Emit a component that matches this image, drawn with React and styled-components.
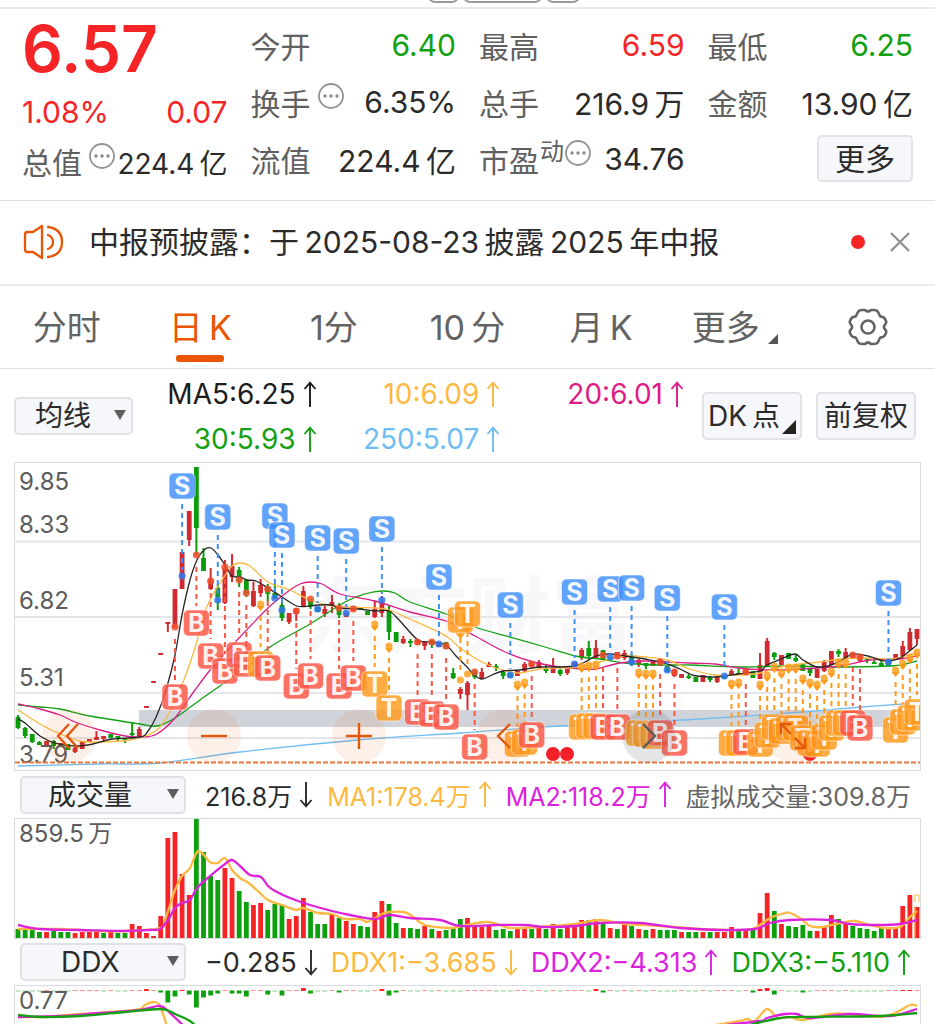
import React from "react";
import styled, { createGlobalStyle } from "styled-components";

const GlobalStyle = createGlobalStyle`
  * { box-sizing: border-box; }
  body { margin: 0; background: #fff; }
  body, button, select {
    font-family: Inter, "Noto Sans CJK SC", sans-serif;
    color: #2b2b2b;
  }
  button, select { margin: 0; cursor: pointer; }
`;

const red = "#f52426";
const green = "#12a012";
const amber = "#fcb941";
const violet = "#dc23dc";
const pink = "#dd1c87";
const sky = "#6fbdf2";
const brand = "#ea5504";
const candleRed = "#cf2b30";

/* ---------- layout ---------- */
const Page = styled.main`
  width: 100%;
  overflow: hidden;
`;
const TopStrip = styled.div`
  display: flex;
  justify-content: center;
  align-items: flex-end;
  gap: 4px;
  height: 9px;
  padding-left: 73px;
  padding-bottom: 4px;
  overflow: hidden;
  border-bottom: 2px solid #ebebeb;
`;
const StripPill = styled.span`
  flex: none;
  width: ${(p) => p.$w}px;
  height: 24px;
  border: 2px solid #9b9b9b;
  border-radius: 7px;
`;

const Quote = styled.section`
  display: grid;
  grid-template-columns: repeat(4, minmax(0, 1fr));
  grid-auto-rows: 57px;
  column-gap: 23px;
  padding: 8px 22px 12px;
  border-bottom: 1px solid #dedede;
`;
const PriceColumn = styled.div`
  grid-row: span 3;
`;
const Price = styled.div`
  height: 67px;
  line-height: 64px;
  font-size: 64px;
  font-weight: 600;
  color: ${red};
`;
const Change = styled.div`
  display: flex;
  justify-content: space-between;
  height: 54px;
  line-height: 56px;
  font-size: 30px;
  color: ${red};
`;
const Stat = styled.div`
  display: flex;
  align-items: center;
  justify-content: space-between;
  height: ${(p) => (p.$compact ? 48 : 57)}px;
  font-size: 30px;
  white-space: nowrap;
`;
const StatLabel = styled.span`
  display: flex;
  align-items: center;
  padding-bottom: 2px;
  color: #606060;
`;
const Sup = styled.sup`
  padding: 0 1px 14px;
  font-size: 24px;
  line-height: 24px;
  vertical-align: baseline;
`;
const InfoButton = styled.button`
  display: flex;
  margin: 0 0 11px ${(p) => p.$gap || 0}px;
  padding: 0;
  border: 0;
  background: none;
`;
const StatValue = styled.span`
  padding-bottom: 1px;
  font-size: ${(p) => (p.$small ? 28 : 30)}px;
  color: ${(p) => p.$color || "#2b2b2b"};
`;
const PlainButton = styled.button`
  position: relative;
  width: ${(p) => p.$w}px;
  height: ${(p) => p.$h}px;
  padding: 0 ${(p) => p.$tail || 0}px 0 0;
  border: 2px solid #e0e2e6;
  border-radius: 5px;
  background: #f6f7fa;
  font-size: ${(p) => p.$size}px;
  line-height: 1;
  white-space: nowrap;
`;
const MoreCell = styled.div`
  display: flex;
  align-items: center;
  justify-content: flex-end;
  padding-bottom: 2px;
`;

const Notice = styled.section`
  display: flex;
  align-items: center;
  height: 85px;
  padding: 0 24px 2px 23px;
  border-bottom: 2px solid #ececec;
`;
const NoticeText = styled.p`
  flex: 1;
  margin: 0 0 0 24px;
  padding-bottom: 4px;
  font-size: 30px;
  white-space: nowrap;
`;
const UnreadDot = styled.span`
  width: 14px;
  height: 14px;
  margin-right: 24px;
  border-radius: 50%;
  background: ${red};
`;
const IconButton = styled.button`
  display: flex;
  align-items: center;
  justify-content: center;
  padding: 0;
  border: 0;
  background: none;
`;

const Tabs = styled.nav`
  display: flex;
  height: 83px;
  border-bottom: 1px solid #dfe0e2;
`;
const Tab = styled.button`
  position: relative;
  display: flex;
  flex: 1;
  align-items: center;
  justify-content: center;
  gap: 8px;
  padding: 0 0 ${(p) => (p.$icon ? 0 : 4)}px;
  border: 0;
  background: none;
  font-size: 34px;
  white-space: nowrap;
  color: ${(p) => (p.$active ? brand : "#636363")};
  &::after {
    content: "";
    position: absolute;
    bottom: 6px;
    left: calc(50% - 24px);
    width: 48px;
    height: 7px;
    border-radius: 3px;
    background: ${(p) => (p.$active ? brand : "transparent")};
  }
`;
const TabCorner = styled.svg`
  align-self: flex-end;
  margin-bottom: 20px;
`;

const Toolbar = styled.section`
  display: flex;
  align-items: center;
  height: 93px;
  padding: 0 19px 0 14px;
`;
const SelectBox = styled.label`
  position: relative;
  flex: none;
  width: ${(p) => p.$w}px;
  height: 38px;
`;
const Select = styled.select`
  width: 100%;
  height: 100%;
  padding: 0 26px 0 ${(p) => p.$inset}px;
  appearance: none;
  border: 2px solid #dfe1e4;
  border-radius: 5px;
  background: #f6f7fa;
  font-size: 28px;
  line-height: 34px;
`;
const SelectArrow = styled.svg`
  position: absolute;
  right: 7px;
  top: 13px;
  pointer-events: none;
`;
const Legend = styled.div`
  display: grid;
  flex: 1;
  grid-template-columns: repeat(3, 1fr);
  grid-auto-rows: 45px;
  margin-right: 18px;
  padding-top: 2px;
`;
const Reading = styled.span`
  display: flex;
  align-items: center;
  justify-content: flex-end;
  gap: ${(p) => p.$gap || 7}px;
  font-size: ${(p) => p.$size || 28}px;
  white-space: nowrap;
  color: ${(p) => p.$color};
`;
const ButtonPair = styled.div`
  display: flex;
  gap: 14px;
`;
const Corner = styled.svg`
  position: absolute;
  right: 4px;
  bottom: 4px;
`;

const Panel = styled.section`
  position: relative;
  margin: 0 14px;
  border: 1px solid #d9dbdf;
  border-bottom-width: ${(p) => (p.$open ? 0 : 1)}px;
`;
const Plot = styled.svg`
  display: block;
  width: 100%;
  height: auto;
  font-family: Inter, "Noto Sans CJK SC", sans-serif;
`;
const Controls = styled.div`
  position: absolute;
  left: 3%;
  right: 11%;
  bottom: 7px;
  display: flex;
  justify-content: space-between;
`;
const RoundButton = styled.button`
  display: flex;
  align-items: center;
  justify-content: center;
  width: 54px;
  height: 54px;
  padding: 0;
  border: 0;
  border-radius: 50%;
  background: ${(p) => (p.$grey ? "rgba(90,95,105,.16)" : "rgba(234,85,4,.09)")};
`;
const IndicatorRow = styled.section`
  display: flex;
  align-items: center;
  gap: 19px;
  height: ${(p) => p.$h}px;
  padding: 0 24px 0 20px;
`;
const Readings = styled.div`
  display: flex;
  flex: 1;
  justify-content: space-between;
`;

/* ---------- small icons ---------- */
const InfoIcon = () => (
  <svg width="26" height="26" viewBox="0 0 26 26" fill="none" stroke="#939393" strokeWidth="1.8">
    <circle cx="13" cy="13" r="12" />
    <g fill="#8a8a8a" stroke="none">
      <circle cx="7" cy="13" r="1.7" /><circle cx="13" cy="13" r="1.7" /><circle cx="19" cy="13" r="1.7" />
    </g>
  </svg>
);
const Speaker = () => (
  <svg width="42" height="36" viewBox="0 0 42 36" fill="none" stroke={brand} strokeWidth="2.3" strokeLinecap="round" strokeLinejoin="round">
    <path d="M10 8H4Q2 8 2 11V25Q2 28 4 28H10L19 34V2Z" />
    <path d="M25 11Q30 13 30 18T25 25M25 3Q39 5 39 18T25 33" />
  </svg>
);
const Cross = () => (
  <svg width="22" height="22" viewBox="0 0 22 22" stroke="#929292" strokeWidth="2.4">
    <path d="M2 2L20 20M20 2L2 20" />
  </svg>
);
const Gear = () => (
  <svg width="40" height="38" viewBox="0 0 40 38" fill="none" stroke="#636363" strokeWidth="2.6" strokeLinejoin="round">
    <path d="M14 2H17Q20 5 23 2H26Q29 2 30 4L32 8Q33 9 35 9Q37 10 38 13Q39 15 36 18V20Q39 23 38 25Q37 28 35 29Q33 29 32 30L30 34Q29 36 26 36H23Q20 33 17 36H14Q11 36 10 34L8 30Q7 29 5 29Q3 28 2 25Q1 23 4 20V18Q1 15 2 13Q3 10 5 9Q7 9 8 8L10 4Q11 2 14 2Z" />
    <circle cx="20" cy="19" r="6.5" />
  </svg>
);
const Arrow = ({ down }) => (
  <svg width="14" height="27" viewBox="0 0 14 27" fill="none" stroke="currentColor" strokeWidth="1.9" role="img" aria-label={down ? "下降" : "上升"}>
    {down ? <path d="M7 1V25M1.5 19L7 25.4L12.5 19" /> : <path d="M7 26V2M1.5 8L7 1.6L12.5 8" />}
  </svg>
);
const DropDown = ({ label, w, inset }) => (
  <SelectBox $w={w}>
    <Select aria-label={label} defaultValue={label} $inset={inset}>
      <option>{label}</option>
    </Select>
    <SelectArrow width="12" height="10" viewBox="0 0 12 10"><path d="M0 0H12L6 10Z" fill="#5d5d5d" /></SelectArrow>
  </SelectBox>
);

/* ---------- data ---------- */
const xAt = (i) => 18 + i * 7.135;

// colour, body top, body bottom, wick top, wick bottom
const candles = `g 717 728 715 729|g 728 736 727 738|g 734 742 734 743|g 742 745 741 745|r 741 746|g 741 746 740 749|r 743 747|g 744 750|r 748 752 747 753|r 742 749|r 739 742|r 737 740 731 740|r 736 739 736 742|g 734 738|g 736 739 736 741|g 738 740 738 743|g 733 735 722 736|r 729 736 727 737|r 706 708|r 681 683|r 653 655|r 622 624 622 632|r 589 628|r 552 589|r 511 540 511 546|g 467 528 467 556|g 558 571 548 571|r 579 589 568 590|g 588 597 584 610|r 568 603 560 604|r 566 577 554 582|g 570 581 567 587|g 580 594 579 597|r 591 606 582 607|r 585 593 579 597|g 587 594 584 601|g 593 598 583 599|g 605 618 602 621|r 613 622 613 624|r 608 614 608 621|r 591 607 586 607|g 600 606 598 609|g 607 612|r 609 614 606 617|r 602 606 595 613|g 608 615 603 618|r 612 617|r 606 611|g 608 610|g 611 615|r 609 617 601 618|r 602 613 596 617|g 610 632 606 640|g 632 642|r 639 643 636 644|g 641 643 639 647|r 640 645|r 642 646 641 650|g 640 645 640 648|r 643 647|g 642 649|g 673 678 668 679|r 689 694 687 699|r 683 695 681 710|g 671 677 669 679|r 672 678 668 679|r 664 667 662 667|g 666 668 664 671|g 672 676 670 679|g 673 678|r 671 676|r 664 671 662 672|r 662 666 661 668|r 662 668 660 668|g 668 671 665 673|r 667 673 658 673|g 670 674 669 676|r 669 673 669 675|r 662 668|r 650 658 648 660|g 648 656 641 659|r 648 658 640 658|g 650 660|g 657 660|r 652 659|r 653 658 650 660|g 657 664 654 666|r 660 664 659 667|g 663 666 663 669|r 662 666|r 659 666|g 666 672|r 670 676 669 677|r 674 678|g 676 678 674 679|g 677 682|r 675 682|g 677 680 676 682|r 677 682 676 683|g 675 679|r 671 675 669 675|g 673 675 669 675|r 669 674|g 671 678|r 665 679 653 679|r 641 667 638 667|g 653 657 652 660|r 655 665|g 653 659|g 658 661 655 662|g 663 671|g 669 673 668 676|r 669 678|r 662 671 660 672|r 651 665|g 651 654 649 657|r 652 659 648 660|r 653 659|r 655 661|g 659 661 658 663|g 662 664 660 664|g 663 666 660 666|g 661 666|r 654 660|r 646 656 641 658|r 632 650 628 651|r 629 639 629 645`
  .split("|")
  .map((row) => row.split(" "))
  .map(([c, a, b, h, l]) => ({ c, a: +a, b: +b, h: +(h || a), l: +(l || b) }));

// kind, bar index, badge centre, signal dot
const signals = `S 23 486 576|S 28 517 600|S 36 516 598|S 37 535 610|S 42 538 609|S 46 541 613|S 51 529 600|S 59 577 644|S 69 605 675|S 78 592 664|S 83 589 657|S 86 588 662|S 91 598 670|S 99 607 676|S 122 593 662|B 22 697 627|B 25 623 555|B 27 656 581|B 29 671 567|B 31 655 580|B 32 664 593|T 34 664 604|B 35 668 589|B 39 686 611|B 41 676 599|B 45 686 608|B 47 678 609|T 50 684 624|T 52 708 646|B 56 712 642|B 58 714 642|B 60 717 646|T 62 620 680|T 63 614 674|B 64 747 672|T 70 744 684|T 71 742 682|B 72 735 664|T 79 727 666|T 80 726 665|T 81 726 664|B 82 727 655|B 84 727 656|T 87 733 672|T 88 734 673|T 89 736 673|B 90 733 662|B 92 743 672|T 100 743 683|T 101 743 682|B 102 742 672|T 104 744 684|T 105 735 675|T 106 727 666|T 107 731 672|T 108 728 667|T 109 728 667|T 110 738 678|T 111 743 682|T 112 744 684|T 113 737 678|T 114 728 671|T 115 723 662|T 116 723 662|B 117 723 655|B 118 728 657|T 123 730 670|T 124 722 663|T 125 718 657|T 126 712 652`
  .split("|")
  .map((row) => row.split(" "))
  .map(([kind, i, y, dot]) => ({ kind, x: xAt(+i), y: +y, dot: +dot }));

const volume = `g929 g930 g930 g932 r932 g931 g932 g932 r933 r932 r932 r932 g933 r932 g933 g933 r924 r926 r933 r936 r916 r838 r832 r874 r895 g819 g852 g876 g880 r868 r878 g891 g902 r905 r903 g910 g904 g905 r919 r916 r898 g912 g924 g924 r914 g918 r921 r924 g926 g927 r912 r901 g904 g923 r928 g928 g929 r926 g929 r931 g930 g928 g919 r918 r926 r927 r926 g930 g929 g931 r929 r929 g929 r928 g929 r924 g929 r927 r925 r920 g920 r919 g924 r928 g929 r924 g926 r929 g930 r929 g930 g930 g930 r932 g932 g932 r932 g932 r932 r932 r927 g930 r930 g930 r913 r893 g911 r924 g926 g927 g925 g931 r931 r926 r915 g919 r924 g926 g928 g929 g931 g928 r929 r928 r906 r895 r907`.split(" ");

const flow = { 18: 2, 20: -2, 21: -12, 22: -6, 23: 1, 24: -4, 25: -17, 26: -7, 27: -5, 28: -3, 30: -3, 31: -3, 32: -6, 35: -4, 37: -5, 40: 3, 41: -3, 45: -2, 51: 2, 52: -5, 53: -2, 81: 2, 82: -2, 103: -2, 104: 2, 105: 3, 106: -4, 110: -2, 124: 1, 125: 1 };

const averages = [
  [sky, "18,766 100,764 160,763 240,752 358,740 460,733 560,726 645,722 700,719 790,713 850,708 917,703"],
  [green, "18,705 40,707 60,709 90,716 140,724 157,726 175,718 200,700 235,675 270,647 310,624 345,602 365,594 382,591 395,593 410,602 446,614 475,627 510,637 545,647 575,656 600,659 625,663 660,665 690,665 738,667 790,666 830,667 890,666 905,664 917,661"],
  [pink, "18,704 40,709 60,715 75,722 100,730 125,736 142,737 157,734 175,718 195,690 215,664 240,637 268,608 290,590 300,584 310,582 322,584 340,594 375,601 410,612 446,621 475,636 503,651 530,661 560,667 585,669 596,669 620,663 645,661 690,663 715,664 738,668 767,670 800,669 840,666 870,660 900,659 917,656"],
  [amber, "18,710 40,724 60,734 80,741 100,742 130,740 145,736 157,730 168,715 180,690 195,648 203,617 211,598 222,580 232,566 240,563 250,566 268,582 290,590 310,600 332,606 350,607 375,608 389,610 410,619 446,636 460,648 482,662 503,670 520,673 540,669 560,668 580,667 600,662 625,656 645,657 667,660 690,669 715,675 738,675 760,673 781,667 800,664 820,662 840,659 870,658 890,659 905,656 917,652"],
  ["#262626", "18,719 25,723 40,736 55,743 75,746 93,744 112,739 140,737 148,731 157,715 166,690 175,655 182,615 190,580 197,560 204,550 211,548 218,555 225,565 232,576 240,577 247,580 256,581 268,588 282,597 297,606 310,606 318,605 332,605 339,608 360,609 375,611 389,611 400,621 418,640 432,642 446,645 456,656 467,667 474,675 482,679 492,675 503,671 520,670 540,667 560,667 575,666 585,662 596,656 610,654 625,656 645,659 665,663 680,669 690,674 697,676 715,677 738,674 760,671 767,665 781,659 795,654 803,660 817,667 831,665 842,660 853,654 868,656 880,660 888,661 900,658 917,645"],
];
const volumeLines = [
  [amber, "18,929 60,929 100,931 125,931 160,928 165,920 175,890 182,876 190,868 197,852 203,854 210,862 218,863 225,858 232,870 240,878 250,884 268,900 282,905 296,910 303,908 318,913 332,914 345,919 360,919 367,922 375,918 382,914 389,912 404,912 412,916 425,925 450,928 462,926 485,922 497,924 510,928 540,927 575,924 600,920 625,924 660,926 700,929 740,930 755,928 770,918 785,913 790,913 800,918 810,926 822,927 840,923 855,921 870,925 885,928 900,927 910,917 917,911"],
  [violet, "18,925 40,929 80,930 125,931 150,930 160,929 168,920 175,908 182,903 190,900 197,888 210,876 225,864 232,860 240,866 250,875 261,877 268,886 275,891 290,898 310,905 332,911 350,915 375,919 389,915 410,918 440,920 460,926 497,925 525,925 545,927 575,926 600,923 640,923 680,928 720,930 755,929 770,923 790,920 830,920 850,924 880,925 900,924 917,920"],
];
const flowLines = [
  [amber, "18,1017 40,1017 80,1014 135,1010 145,1005 153,1002 160,1006 168,1030"],
  [violet, "18,1017 60,1016 100,1013 140,1010 160,1006 170,1013 188,1030"],
  [green, "18,1015 40,1017 80,1016 125,1012 161,1009 175,1014 190,1021 200,1030"],
  [amber, "710,1026 740,1021 747,1019 755,1021 767,1009 778,1018 790,1017 803,1020 830,1014 850,1014 880,1017 895,1013 910,1005 917,1006"],
  [violet, "718,1026 760,1021 767,1018 785,1014 797,1014 810,1018 850,1014 890,1016 917,1009"],
  [green, "745,1026 780,1018 800,1017 880,1016 917,1013"],
];

const tone = { S: "#3f8ffb", B: "#fb5444", T: "#ff9a1c" };
const dotTone = { S: "#2f78ee", B: "#f2502e", T: "#fda021" };

function Signal({ kind, x, y, dot }) {
  const above = y < dot;
  const from = above ? y + 18 : dot + 12;
  const to = above ? dot - 6 : y - 17;
  return (
    <g>
      <line x1={x} x2={x} y1={from} y2={to} stroke={tone[kind]} strokeWidth="2" strokeDasharray="5 4" />
      <circle cx={x} cy={dot} r="3.6" fill={dotTone[kind]} fillOpacity=".85" />
      {kind === "T" && <path d={above ? `M${x - 5} ${y + 13}h10l-5 6z` : `M${x - 4} ${dot + 2}h8l-4 5z`} fill={tone.T} />}
      <rect x={x - 13} y={y - 13} width="26" height="26" rx="5" fill={tone[kind]} fillOpacity=".82" stroke="#fff" strokeOpacity=".55" />
      <text x={x} y={y + 9} textAnchor="middle" fontSize="25" fontWeight="700" fill="#fff" fillOpacity=".92">{kind}</text>
    </g>
  );
}

// Cubic segments that pass through every point.
const smooth = (points) => {
  const p = points.split(" ").map((s) => s.split(",").map(Number));
  return p.slice(1).reduce((d, b, i) => {
    const a = p[i];
    const before = p[i - 1] || a;
    const after = p[i + 2] || b;
    const c1 = [a[0] + (b[0] - before[0]) / 6, a[1] + (b[1] - before[1]) / 6];
    const c2 = [b[0] - (after[0] - a[0]) / 6, b[1] - (after[1] - a[1]) / 6];
    return `${d}C${c1} ${c2} ${b}`;
  }, `M${p[0]}`);
};

const Lines = ({ items, width }) =>
  items.map(([color, points], i) => (
    <path key={i} d={smooth(points)} fill="none" stroke={color} strokeWidth={width} strokeLinejoin="round" />
  ));

function PriceChart() {
  return (
    <Plot viewBox="15 463 905 307" role="img" aria-label="日K线图">
      <text x="302" y="646" fontSize="83" fontWeight="700" fill="#f8f8fa">东方财富</text>
      <path d="M15 541.5H920M15 617H920M15 693H920M15 738H920" stroke="#e5e6ec" strokeWidth="2" />
      <rect x="139" y="710" width="781" height="17" fill="#d0d4da" />
      {candles.map(({ c, a, b, h, l }, i) => (
        <g key={i} fill={c === "r" ? candleRed : "#0c9c0c"}>
          <rect x={xAt(i) - 1} y={h} width="2" height={l - h} />
          <rect x={xAt(i) - 2.4} y={a} width="4.8" height={b - a} />
        </g>
      ))}
      <Lines items={averages} width="1.3" />
      <g fontSize="24" fill="#5c5c5c">
        <text x="19" y="490">9.85</text>
        <text x="19" y="533">8.33</text>
        <text x="19" y="609">6.82</text>
        <text x="19" y="686">5.31</text>
        <text x="19" y="763">3.79</text>
      </g>
      <path d="M15 762.5H920" stroke="#e8793f" strokeWidth="2" strokeDasharray="5 2" />
      <circle cx="810" cy="754" r="7" fill={red} />
      {signals.map((s, i) => <Signal key={i} {...s} />)}
      <circle cx="553" cy="754" r="7" fill="#f52027" />
      <circle cx="567" cy="754" r="7" fill="#f52027" />
    </Plot>
  );
}

function VolumeChart() {
  return (
    <Plot viewBox="15 819 905 119" role="img" aria-label="成交量图">
      {volume.map((v, i) => {
        const y = +v.slice(1);
        return <rect key={i} x={xAt(i) - 2.4} y={y} width="4.8" height={938 - y} fill={v[0] === "r" ? red : "#0ca00c"} />;
      })}
      <path d="M915 902V895H919V902M915 906V938" fill="none" stroke={amber} />
      <Lines items={volumeLines} width="2.3" />
      <text x="19" y="842" fontSize="24" fill="#5c5c5c">859.5{"\u2009"}万</text>
    </Plot>
  );
}

function FlowChart() {
  return (
    <Plot viewBox="15 986 905 38" role="img" aria-label="DDX图">
      {volume.map((v, i) => {
        const value = flow[i];
        const up = value ? value > 0 : v[0] === "r";
        const size = value ? Math.abs(value) : 1;
        return <rect key={i} x={xAt(i) - 2.4} y={up ? 991 - size : 990.5} width="4.8" height={size} fill={up ? red : "#0ca00c"} opacity={value ? 1 : 0.5} />;
      })}
      <text x="19" y="1009" fontSize="24" fill="#5c5c5c">0.77</text>
      <Lines items={flowLines} width="2.3" />
    </Plot>
  );
}

const controls = [
  ["后退", "M14 2L3 14L14 26M23 2L12 14L23 26"],
  ["缩小", "M1 14H27"],
  ["放大", "M1 14H27M14 1V27"],
  ["左移", "M20 2L8 14L20 26"],
  ["右移", "M8 2L20 14L8 26"],
  ["全屏", "M2 12V2H12M2 2L12 12M26 16V26H16M26 26L16 16"],
];

const Info = ({ gap }) => (
  <InfoButton aria-label="说明" $gap={gap}><InfoIcon /></InfoButton>
);

export default function App() {
  return (
    <>
      <GlobalStyle />
      <Page>
        <TopStrip>
          <StripPill $w={31} /><StripPill $w={79} /><StripPill $w={34} />
        </TopStrip>

        <Quote>
          <PriceColumn>
            <Price>6.57</Price>
            <Change><span>1.08%</span><span>0.07</span></Change>
            <Stat $compact>
              <StatLabel>总值<Info gap={7} /></StatLabel>
              <StatValue $small>224.4{"\u2009"}亿</StatValue>
            </Stat>
          </PriceColumn>
          <Stat><StatLabel>今开</StatLabel><StatValue $color={green}>6.40</StatValue></Stat>
          <Stat><StatLabel>最高</StatLabel><StatValue $color={red}>6.59</StatValue></Stat>
          <Stat><StatLabel>最低</StatLabel><StatValue $color={green}>6.25</StatValue></Stat>
          <Stat><StatLabel>换手<Info gap={7} /></StatLabel><StatValue>6.35%</StatValue></Stat>
          <Stat><StatLabel>总手</StatLabel><StatValue>216.9{"\u2009"}万</StatValue></Stat>
          <Stat><StatLabel>金额</StatLabel><StatValue>13.90{"\u2009"}亿</StatValue></Stat>
          <Stat><StatLabel>流值</StatLabel><StatValue>224.4{"\u2009"}亿</StatValue></Stat>
          <Stat><StatLabel>市盈<Sup>动</Sup><Info /></StatLabel><StatValue>34.76</StatValue></Stat>
          <MoreCell><PlainButton $w={96} $h={47} $size={30}>更多</PlainButton></MoreCell>
        </Quote>

        <Notice>
          <Speaker />
          <NoticeText>中报预披露：于{"\u2009"}2025-08-23{"\u2009"}披露{"\u2009"}2025{"\u2009"}年中报</NoticeText>
          <UnreadDot />
          <IconButton aria-label="关闭"><Cross /></IconButton>
        </Notice>

        <Tabs>
          <Tab>分时</Tab>
          <Tab $active>日{"\u2009"}K</Tab>
          <Tab>1分</Tab>
          <Tab>10{"\u2009"}分</Tab>
          <Tab>月{"\u2009"}K</Tab>
          <Tab>更多<TabCorner width="10" height="10" viewBox="0 0 10 10"><path d="M10 0V10H0Z" fill="#555" /></TabCorner></Tab>
          <Tab $icon aria-label="设置"><Gear /></Tab>
        </Tabs>

        <Toolbar>
          <DropDown label="均线" w={119} inset={19} />
          <Legend>
            <Reading $color="#1c1c1c">MA5:6.25<Arrow /></Reading>
            <Reading $color={amber}>10:6.09<Arrow /></Reading>
            <Reading $color={pink}>20:6.01<Arrow /></Reading>
            <Reading $color={green}>30:5.93<Arrow /></Reading>
            <Reading $color={sky}>250:5.07<Arrow /></Reading>
          </Legend>
          <ButtonPair>
            <PlainButton $w={100} $h={48} $size={28} $tail={16}>
              DK{"\u2009"}点
              <Corner width="14" height="14" viewBox="0 0 14 14"><path d="M14 0V14H0Z" fill="#222" /></Corner>
            </PlainButton>
            <PlainButton $w={100} $h={48} $size={28}>前复权</PlainButton>
          </ButtonPair>
        </Toolbar>

        <Panel>
          <PriceChart />
          <Controls>
            {controls.map(([name, d], i) => (
              <RoundButton key={name} aria-label={name} $grey={i === 4}>
                <svg width="28" height="28" viewBox="0 0 28 28" fill="none" stroke={i === 4 ? "#5b5b5b" : "#e2580f"} strokeWidth="2.4">
                  <path d={d} />
                </svg>
              </RoundButton>
            ))}
          </Controls>
        </Panel>

        <IndicatorRow $h={47}>
          <DropDown label="成交量" w={166} inset={26} />
          <Readings>
            <Reading $size={25} $color="#2b2b2b">216.8万<Arrow down /></Reading>
            <Reading $size={25} $color={amber}>MA1:178.4万<Arrow /></Reading>
            <Reading $size={25} $color={violet}>MA2:118.2万<Arrow /></Reading>
            <Reading $size={25} $color="#666">虚拟成交量:309.8万</Reading>
          </Readings>
        </IndicatorRow>
        <Panel><VolumeChart /></Panel>

        <IndicatorRow $h={46}>
          <DropDown label="DDX" w={166} inset={39} />
          <Readings>
            <Reading $size={27} $color="#2b2b2b">−0.285<Arrow down /></Reading>
            <Reading $size={27} $color={amber}>DDX1:−3.685<Arrow down /></Reading>
            <Reading $size={27} $color={violet}>DDX2:−4.313<Arrow /></Reading>
            <Reading $size={27} $color={green}>DDX3:−5.110<Arrow /></Reading>
          </Readings>
        </IndicatorRow>
        <Panel $open><FlowChart /></Panel>
      </Page>
    </>
  );
}
